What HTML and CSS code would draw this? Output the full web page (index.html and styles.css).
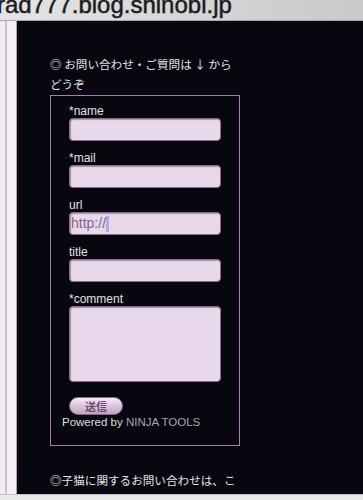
FILE: index.html
```html
<!DOCTYPE html>
<html lang="ja">

<head>
    <meta charset="UTF-8">
    <title>rad777.blog.shinobi.jp</title>
    <link rel="stylesheet" href="styles.css">
</head>

<body>
    <div class="urlbar">
        <div class="urltext">rad777.blog.shinobi.jp</div>
    </div>

    <div class="main">
        <div class="edge"></div>
        <div class="content">
            <p class="note">◎ お問い合わせ・ご質問は ↓ からどうぞ</p>

            <div class="form-box">
                <form class="mail-form">
                    <div class="form-group">
                        <label>*name</label>
                        <input type="text" class="field">
                    </div>
                    <div class="form-group">
                        <label>*mail</label>
                        <input type="text" class="field">
                    </div>
                    <div class="form-group">
                        <label>url</label>
                        <div class="field url-field">http://<span class="caret"></span></div>
                    </div>
                    <div class="form-group">
                        <label>title</label>
                        <input type="text" class="field">
                    </div>
                    <div class="form-group">
                        <label>*comment</label>
                        <textarea class="field comment"></textarea>
                    </div>
                    <button type="button" class="send">送信</button>
                </form>
                <div class="powered">Powered by <span class="ninja">NINJA TOOLS</span></div>
            </div>

            <p class="note note-bottom">◎子猫に関するお問い合わせは、こちらのフォームでも受け付けております。</p>
        </div>
    </div>

    <div class="bottombar"></div>
</body>

</html>
```

FILE: styles.css
```css
body {
    margin: 0;
    height: 500px;
    display: flex;
    flex-direction: column;
    overflow: hidden;
    background-color: #08070f;
    font-family: "Liberation Sans", Arial, sans-serif;
}

.urlbar {
    height: 20px;
    flex-shrink: 0;
    overflow: hidden;
    background: linear-gradient(to right, #e4e4e4, #c9c9c9);
    border-bottom: 1px solid #a9a9ad;
}

.urltext {
    margin-top: -9px;
    margin-left: -3px;
    font-size: 24px;
    line-height: 27px;
    color: #1c1c1e;
    white-space: nowrap;
    -webkit-text-stroke: 0.5px #1c1c1e;
}

.main {
    flex: 1;
    min-height: 0;
    display: flex;
    overflow: hidden;
}

.edge {
    width: 17px;
    flex-shrink: 0;
    background: linear-gradient(to right,
            #eeecf0 0, #eeecf0 5px,
            #d8b4d8 5px, #d8b4d8 7px,
            #f3f1f5 7px, #f3f1f5 16px,
            #b79ab7 16px, #b79ab7 17px);
}

.content {
    flex: 1;
    padding: 33px 0 0 33px;
}

.note {
    width: 190px;
    margin: 0;
    font-family: "Noto Sans CJK JP", sans-serif;
    font-size: 11.6px;
    line-height: 20px;
    color: #e4e4e4;
}

.note-bottom {
    margin-top: 24px;
}

.form-box {
    width: 188px;
    margin-top: 1px;
    border: 1px solid #a680a8;
    padding: 8px 0 16px 0;
}

.mail-form {
    padding-left: 18px;
}

.form-group {
    margin-bottom: 10px;
}

label {
    display: block;
    font-size: 12px;
    line-height: 14px;
    color: #e2e2e2;
}

.field {
    display: block;
    width: 152px;
    height: 23px;
    margin: 0;
    padding: 0 1px;
    box-sizing: border-box;
    background-color: #e9d7eb;
    border: 1px solid #8c6c8e;
    border-radius: 4px;
    box-shadow: inset 1px 1px 1px rgba(0, 0, 0, 0.3);
    font-family: "Liberation Sans", Arial, sans-serif;
    font-size: 14px;
    line-height: 21px;
    color: #84648a;
}

.caret {
    display: inline-block;
    width: 3px;
    height: 16px;
    vertical-align: middle;
    background-color: #a8aee8;
}

.comment {
    height: 76px;
    resize: none;
}

.form-group:last-of-type {
    margin-bottom: 15px;
}

.send {
    display: block;
    width: 54px;
    height: 18px;
    padding: 0;
    border: 1px solid #8a6a8c;
    border-radius: 9px;
    background: linear-gradient(#f7eff7, #d9bfd9 55%, #c4a4c6);
    font-family: "Noto Sans CJK JP", sans-serif;
    font-size: 11px;
    font-weight: bold;
    line-height: 16px;
    color: #6e4c70;
    cursor: pointer;
}

.powered {
    padding-left: 11px;
    font-size: 11.5px;
    line-height: 14px;
    color: #dedede;
}

.ninja {
    color: #aaa3b4;
}

.bottombar {
    height: 5px;
    flex-shrink: 0;
    background-color: #e8e8e8;
    border-top: 1px solid #c4c4c4;
}
```
